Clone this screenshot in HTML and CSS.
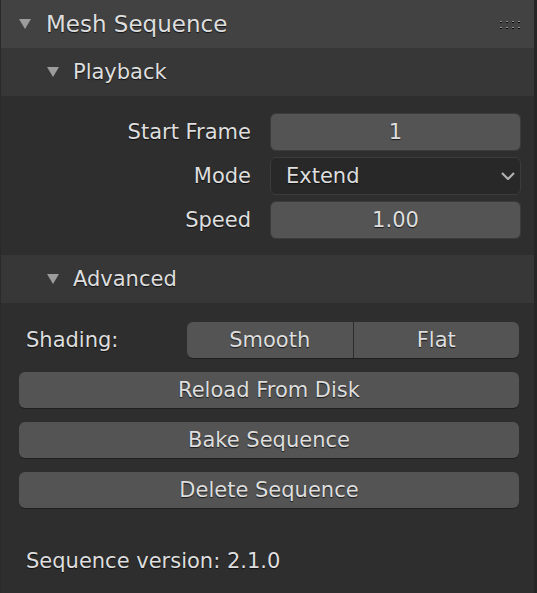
FILE: index.html
```html
<!DOCTYPE html>
<html>
<head>
<meta charset="utf-8">
<link rel="stylesheet" href="styles.css">
</head>
<body>
<div class="page">
  <div class="panel">
    <div class="panel-header">
      <svg class="tri tri-main" width="12" height="10" viewBox="0 0 12 10"><polygon points="0,0 12,0 6,10" /></svg>
      <span class="title">Mesh Sequence</span>
      <svg class="grip" width="20" height="8" viewBox="0 0 20 8">
        <rect x="0" y="0" width="2" height="1" class="gl"/><rect x="0" y="1" width="2" height="1" class="gd"/>
        <rect x="6" y="0" width="2" height="1" class="gl"/><rect x="6" y="1" width="2" height="1" class="gd"/>
        <rect x="12" y="0" width="2" height="1" class="gl"/><rect x="12" y="1" width="2" height="1" class="gd"/>
        <rect x="18" y="0" width="2" height="1" class="gl"/><rect x="18" y="1" width="2" height="1" class="gd"/>
        <rect x="0" y="6" width="2" height="1" class="gl"/><rect x="0" y="7" width="2" height="1" class="gd"/>
        <rect x="6" y="6" width="2" height="1" class="gl"/><rect x="6" y="7" width="2" height="1" class="gd"/>
        <rect x="12" y="6" width="2" height="1" class="gl"/><rect x="12" y="7" width="2" height="1" class="gd"/>
        <rect x="18" y="6" width="2" height="1" class="gl"/><rect x="18" y="7" width="2" height="1" class="gd"/>
      </svg>
    </div>

    <div class="sub-header">
      <svg class="tri" width="12" height="10" viewBox="0 0 12 10"><polygon points="0,0 12,0 6,10" /></svg>
      <span class="sub-title">Playback</span>
    </div>
    <div class="sub-body playback">
      <div class="prop-row">
        <span class="prop-label">Start Frame</span>
        <div class="field num">1</div>
      </div>
      <div class="prop-row">
        <span class="prop-label">Mode</span>
        <div class="field menu">
          <span>Extend</span>
          <svg class="chev" width="14" height="8" viewBox="0 0 14 8"><polyline points="1,1 7,7 13,1" /></svg>
        </div>
      </div>
      <div class="prop-row">
        <span class="prop-label">Speed</span>
        <div class="field num">1.00</div>
      </div>
    </div>

    <div class="sub-header">
      <svg class="tri" width="12" height="10" viewBox="0 0 12 10"><polygon points="0,0 12,0 6,10" /></svg>
      <span class="sub-title">Advanced</span>
    </div>
    <div class="sub-body advanced">
      <div class="shade-row">
        <span class="plain-label">Shading:</span>
        <div class="segmented">
          <div class="btn seg-left">Smooth</div>
          <div class="btn seg-right">Flat</div>
        </div>
      </div>
      <div class="btn wide">Reload From Disk</div>
      <div class="btn wide">Bake Sequence</div>
      <div class="btn wide">Delete Sequence</div>
      <div class="version">Sequence version: 2.1.0</div>
    </div>
  </div>
  <div class="edge"></div>
</div>
</body>
</html>
```

FILE: styles.css
```css
html, body {
  margin: 0;
  padding: 0;
  background: #2e2e2e;
}

body {
  font-family: "DejaVu Sans", "Liberation Sans", sans-serif;
  color: #dedede;
  font-size: 21px;
}

.page {
  display: flex;
  width: 537px;
  height: 593px;
  overflow: hidden;
}

.panel {
  width: 533px;
  border-left: 1px solid #2a2a2a;
  background: #2e2e2e;
  display: flex;
  flex-direction: column;
}

.edge {
  width: 3px;
  background: #262626;
}

.tri polygon {
  fill: #9c9c9c;
}

.panel-header {
  height: 48px;
  background: #424242;
  display: flex;
  align-items: center;
  padding-left: 18px;
}

.title {
  font-size: 23px;
  line-height: 48px;
  margin-left: 15px;
  text-shadow: 0 1px 1px rgba(0, 0, 0, 0.7);
  flex: 1;
}

.grip {
  margin-right: 14px;
  margin-top: 2px;
}

.grip .gl { fill: #909090; }
.grip .gd { fill: #050505; }

.sub-header {
  height: 48px;
  background: #373737;
  display: flex;
  align-items: center;
  padding-left: 46px;
}

.sub-title {
  line-height: 48px;
  margin-left: 14px;
  text-shadow: 0 1px 1px rgba(0, 0, 0, 0.7);
}

.sub-body.playback {
  padding: 17px 13px 16px 0;
  display: flex;
  flex-direction: column;
  gap: 6px;
}

.prop-row {
  display: grid;
  grid-template-columns: 1fr 251px;
  column-gap: 19px;
  height: 38px;
  align-items: center;
}

.prop-label {
  text-align: right;
  text-shadow: 0 1px 1px rgba(0, 0, 0, 0.7);
}

.field {
  height: 38px;
  box-sizing: border-box;
  border-radius: 6px;
  border: 1px solid #3b3b3b;
  display: flex;
  align-items: center;
  text-shadow: 0 1px 1px rgba(0, 0, 0, 0.7);
}

.field.num {
  background: #545454;
  justify-content: center;
}

.field.menu {
  background: #282828;
  justify-content: space-between;
  padding-left: 15px;
  padding-right: 5px;
}

.chev polyline {
  fill: none;
  stroke: #b0b0b0;
  stroke-width: 2.2;
}

.sub-body.advanced {
  padding: 19px 15px 0 18px;
  display: flex;
  flex-direction: column;
  gap: 14px;
}

.shade-row {
  display: grid;
  grid-template-columns: 168px 1fr;
  height: 36px;
  align-items: center;
}

.plain-label {
  padding-left: 7px;
  text-shadow: 0 1px 1px rgba(0, 0, 0, 0.7);
}

.segmented {
  display: flex;
  height: 36px;
}

.btn {
  height: 36px;
  box-sizing: border-box;
  background: #545454;
  border-radius: 6px;
  display: flex;
  align-items: center;
  justify-content: center;
  box-shadow: 0 1px 0 rgba(0, 0, 0, 0.35);
  text-shadow: 0 1px 1px rgba(0, 0, 0, 0.7);
}

.seg-left {
  flex: 1;
  border-radius: 6px 0 0 6px;
  border-right: 1px solid #2c2c2c;
}

.seg-right {
  flex: 1;
  border-radius: 0 6px 6px 0;
}

.version {
  margin-top: 21px;
  height: 36px;
  line-height: 36px;
  padding-left: 7px;
  text-shadow: 0 1px 1px rgba(0, 0, 0, 0.7);
}
```
